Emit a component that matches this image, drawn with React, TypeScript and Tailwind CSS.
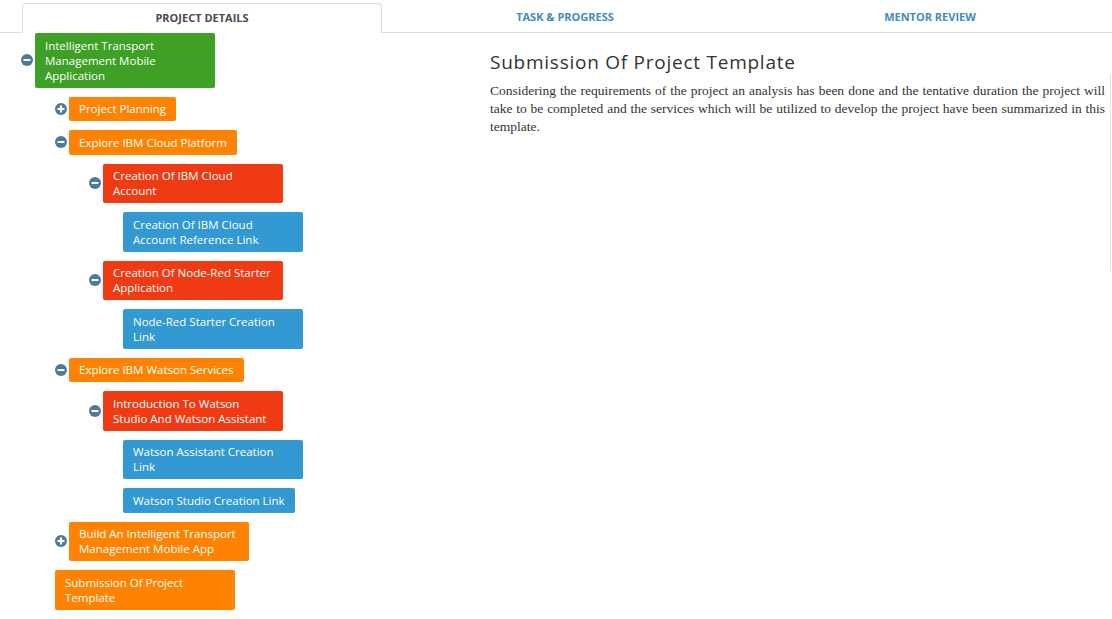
import React from "react";

type TreeNode = {
    label: string;
    color: string;
    wide?: boolean;
    open?: boolean;
    children?: TreeNode[];
};

const GREEN = "bg-[#3fa026]";
const ORANGE = "bg-[#ff8300]";
const RED = "bg-[#f03a14]";
const BLUE = "bg-[#3399d3]";

const tree: TreeNode = {
    label: "Intelligent Transport\nManagement Mobile\nApplication",
    color: GREEN,
    wide: true,
    open: true,
    children: [
        { label: "Project Planning", color: ORANGE, open: false, children: [] },
        {
            label: "Explore IBM Cloud Platform",
            color: ORANGE,
            open: true,
            children: [
                {
                    label: "Creation Of IBM Cloud\nAccount",
                    color: RED,
                    wide: true,
                    open: true,
                    children: [
                        { label: "Creation Of IBM Cloud\nAccount Reference Link", color: BLUE, wide: true },
                    ],
                },
                {
                    label: "Creation Of Node-Red Starter\nApplication",
                    color: RED,
                    wide: true,
                    open: true,
                    children: [{ label: "Node-Red Starter Creation\nLink", color: BLUE, wide: true }],
                },
            ],
        },
        {
            label: "Explore IBM Watson Services",
            color: ORANGE,
            open: true,
            children: [
                {
                    label: "Introduction To Watson\nStudio And Watson Assistant",
                    color: RED,
                    wide: true,
                    open: true,
                    children: [
                        { label: "Watson Assistant Creation\nLink", color: BLUE, wide: true },
                        { label: "Watson Studio Creation Link", color: BLUE },
                    ],
                },
            ],
        },
        {
            label: "Build An Intelligent Transport\nManagement Mobile App",
            color: ORANGE,
            wide: true,
            open: false,
            children: [],
        },
        { label: "Submission Of Project\nTemplate", color: ORANGE, wide: true },
    ],
};

const Toggle = ({ open }: { open: boolean }) => (
    <svg width="12" height="12" viewBox="0 0 12 12" className="shrink-0">
        <circle cx="6" cy="6" r="6" fill="#4b7a9b" />
        <rect x="2.5" y="4.9" width="7" height="2.2" rx="0.6" fill="#fff" />
        {!open && <rect x="4.9" y="2.5" width="2.2" height="7" rx="0.6" fill="#fff" />}
    </svg>
);

const Branch = ({ node }: { node: TreeNode }) => {
    const hasToggle = node.children !== undefined;
    return (
        <div className="flex flex-col gap-[9px]">
            <div className="flex items-center gap-[2px]">
                {hasToggle && <Toggle open={!!node.open} />}
                <div
                    className={`${node.color} ${node.wide ? "w-[180px]" : "w-fit"} rounded-[2px] px-[10px] py-[4.75px] text-[11.5px] leading-[15px] text-white whitespace-pre`}
                >
                    {node.label}
                </div>
            </div>
            {node.open && node.children && node.children.length > 0 && (
                <div className="flex flex-col gap-[9px] pl-[34px]">
                    {node.children.map((c) => (
                        <Branch key={c.label} node={c} />
                    ))}
                </div>
            )}
        </div>
    );
};

export default function App() {
    return (
        <div className="min-h-screen bg-white font-['Open_Sans',sans-serif] text-[#333]">
            <div className="flex items-end pl-[22px] pt-[3px] border-b border-[#dddddd]">
                <div className="w-[360px] h-[30px] -mb-px bg-white border border-b-0 border-[#dddddd] rounded-t-[4px] flex items-center justify-center text-[11px] font-bold text-[#4a4a4a]">
                    PROJECT DETAILS
                </div>
                <div className="w-[366px] h-[29px] flex items-center justify-center text-[11px] font-bold text-[#3d8cc4]">
                    TASK &amp; PROGRESS
                </div>
                <div className="flex-1 h-[29px] flex items-center justify-center text-[11px] font-bold text-[#3d8cc4]">
                    MENTOR REVIEW
                </div>
            </div>

            <div className="flex">
                <div className="w-[490px] shrink-0 pl-[21px] pb-[8px]">
                    <Branch node={tree} />
                </div>
                <div className="flex flex-1">
                    <div className="w-[615px] pt-[16px]">
                        <h1 className="text-[19px] leading-[26px] tracking-[0.75px] text-[#333]">
                            Submission Of Project Template
                        </h1>
                        <p className="mt-[7px] font-['Liberation_Serif',serif] text-[13.5px] leading-[18px] text-[#333] text-justify">
                            Considering the requirements of the project an analysis has been done and the tentative
                            duration the project will take to be completed and the services which will be utilized to
                            develop the project have been summarized in this template.
                        </p>
                    </div>
                    <div className="ml-[5px] mt-[41px] w-px h-[197px] bg-[#e3e3e3]" />
                </div>
            </div>
        </div>
    );
}
